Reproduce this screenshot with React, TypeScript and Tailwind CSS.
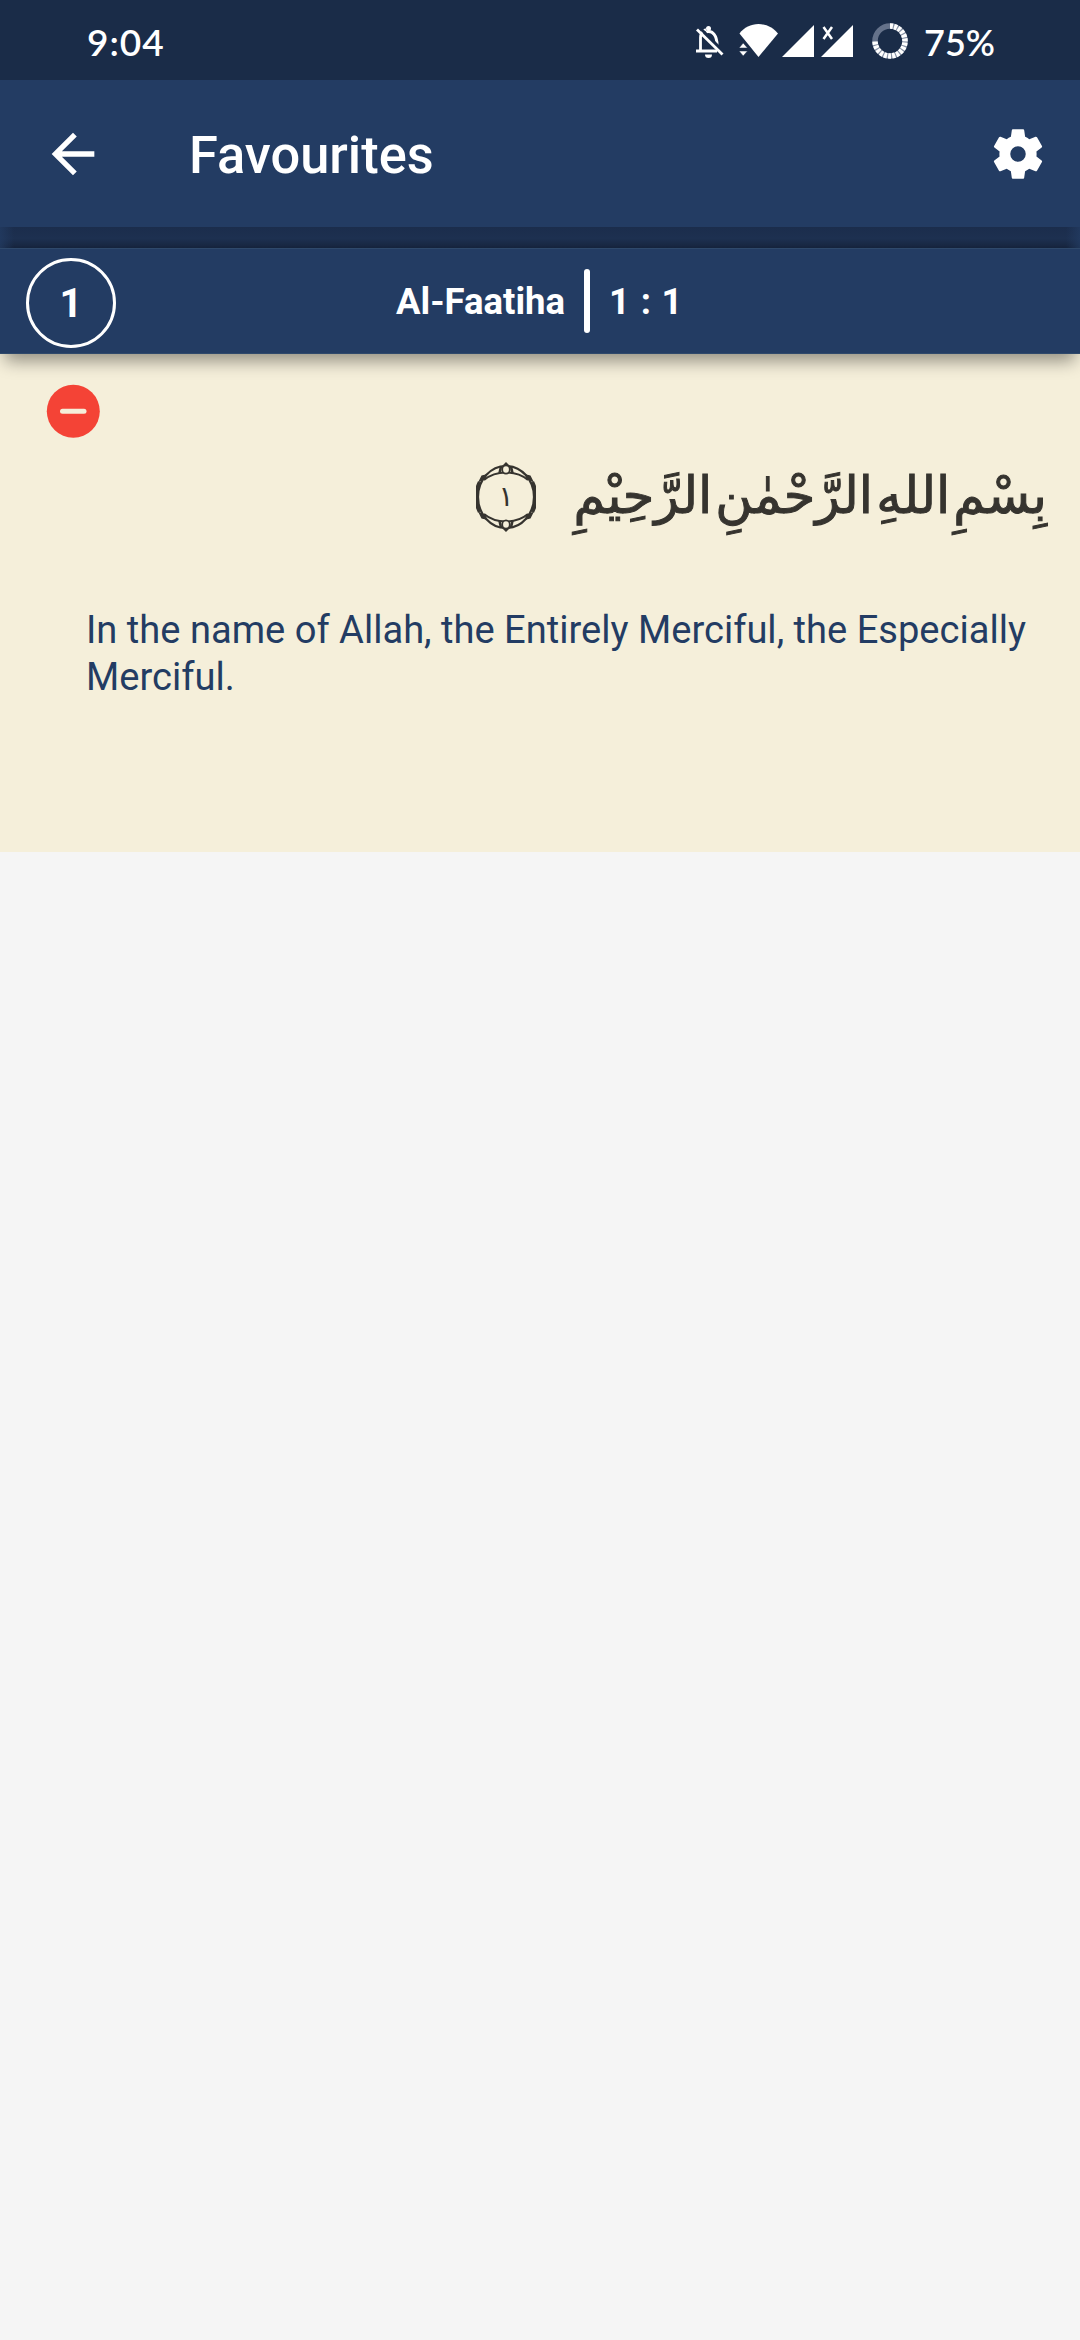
import React from "react";

function BellOff() {
  return (
    <svg className="block w-[30px] h-[34px]" viewBox="0 0 30 34" fill="none" stroke="#fff">
      <path d="M5.500 27V13.500C5.500 10 8 6.500 11 5.500" strokeWidth="2.800" />
      <path d="M1 27h21" strokeWidth="3" />
      <path d="M11 8c7-2 11 4 11 13" strokeWidth="3" />
      <circle cx="13.500" cy="4.500" r="2.500" fill="#fff" stroke="none" />
      <path d="M10 30.500h7a3.500 3.500 0 0 1-7 0z" fill="#fff" stroke="none" />
      <path d="M4.500 3.500L30 29" stroke="#1a2c48" strokeWidth="3" />
      <path d="M2 5.500L27.500 30.500" strokeWidth="2.800" />
    </svg>
  );
}

function Signals() {
  return (
    <svg className="block w-[115px] h-[34px]" viewBox="0 0 115 34" fill="#fff">
      <path d="M0.500 9.500C5 3.500 12 0 19.500 0S34 3.500 39 9.500L19.500 33z" />
      <path d="M0 24l4.200-5 4.300 5zM0 27h8.500l-4.300 5z" stroke="#1a2c48" strokeWidth="0.500" />
      <path d="M43 33L75 1v32z" />
      <path d="M82 33L114 1v32z" />
      <path d="M84.500 3l8.500 12M93 3l-8.500 12" stroke="#fff" strokeWidth="2.500" fill="none" />
    </svg>
  );
}

function BatteryRing() {
  return (
    <svg className="block w-9 h-9" viewBox="0 0 36 36" fill="none">
      <path d="M3 18A15 15 0 0 1 18 3" stroke="#65728a" strokeWidth="5.500" />
      <path d="M18 3A15 15 0 1 1 3 18" stroke="#8792a5" strokeWidth="5.500" />
      <path d="M18 3A15 15 0 1 1 3 18" stroke="#fff" strokeWidth="5.500" strokeDasharray="3 1.160" />
    </svg>
  );
}

function AyahMark() {
  return (
    <svg className="block w-[60px] h-[70px]" viewBox="0 0 60 70" fill="none" stroke="#36342f">
      <ellipse cx="30" cy="35" rx="28" ry="31" strokeWidth="2.200" />
      <path d="M3.500 20A31 33 0 0 0 3.500 50M56.500 20A31 33 0 0 1 56.500 50" strokeWidth="3.400" />
      <path d="M2 20.500L5.500 13.500L11.500 12L9 17.500zM58 20.500L54.500 13.500L48.500 12L51 17.500zM2 49.500L5.500 56.500L11.500 58L9 52.500zM58 49.500L54.500 56.500L48.500 58L51 52.500z" fill="#36342f" stroke="none" />
      <path d="M8 18Q17 10.500 30 10.500Q43 10.500 52 18M8 52Q17 59.500 30 59.500Q43 59.500 52 52" strokeWidth="2" />
      <path d="M25 4.500L23.500 11M35 4.500L36.500 11M25 65.500L23.500 59M35 65.500L36.500 59" strokeWidth="2.500" />
      <path d="M30 0l4.500 4.500h-9zM30 70l4.500-4.500h-9z" fill="#36342f" stroke="none" />
      <ellipse cx="30" cy="7.500" rx="3.800" ry="4.200" fill="#f5efda" strokeWidth="1.800" />
      <ellipse cx="30" cy="62.500" rx="3.800" ry="4.200" fill="#f5efda" strokeWidth="1.800" />
    </svg>
  );
}

export default function App() {
  return (
    <div className="flex h-[2340px] w-[1080px] flex-col overflow-hidden bg-[#f5f5f5] font-[Roboto,sans-serif] text-white">
      <div className="flex h-20 shrink-0 items-center bg-[#1a2c48] pl-[87px] pr-[85px] font-[Lato,sans-serif] text-[36px] font-semibold">
        <span className="mt-1 text-[37px] tracking-[1px]">9:04</span>
        <div className="ml-auto flex items-center">
          <div className="mt-0.5"><BellOff /></div>
          <div className="ml-[14px] mt-0.5"><Signals /></div>
          <div className="ml-[18px] mt-0.5"><BatteryRing /></div>
          <span className="ml-4 mt-1">75%</span>
        </div>
      </div>

      <header className="flex h-[147px] shrink-0 items-center bg-[#233c63] pr-[31px] pl-[41px]">
        <svg className="block h-16 w-16" viewBox="0 0 24 24" fill="#fff">
          <path d="M20 11H7.830l5.590-5.590L12 4l-8 8 8 8 1.410-1.410L7.830 13H20v-2z" />
        </svg>
        <h1 className="ml-[84px] mt-1 text-[52.400px] font-medium leading-none">Favourites</h1>
        <svg className="ml-auto block h-[62px] w-[62px]" viewBox="0 0 24 24" fill="#fff">
          <path d="M19.140 12.940c.04-.3.060-.61.060-.94 0-.32-.02-.64-.07-.94l2.030-1.580c.18-.14.230-.41.120-.61l-1.920-3.320c-.12-.22-.37-.29-.59-.22l-2.390.96c-.5-.38-1.030-.7-1.620-.94l-.36-2.540c-.04-.24-.24-.41-.48-.41h-3.840c-.24 0-.43.170-.47.410l-.36 2.540c-.59.240-1.130.57-1.620.94l-2.390-.96c-.22-.08-.47 0-.59.220L2.740 8.870c-.12.210-.08.470.120.610l2.030 1.580c-.05.300-.09.630-.09.940s.02.640.070.940l-2.030 1.580c-.18.140-.23.410-.12.610l1.920 3.320c.12.220.37.290.59.220l2.390-.96c.5.380 1.030.7 1.620.94l.36 2.540c.05.240.24.410.48.410h3.840c.24 0 .44-.17.470-.41l.36-2.540c.59-.24 1.130-.56 1.620-.94l2.390.96c.22.080.47 0 .59-.22l1.920-3.320c.12-.22.070-.47-.12-.61l-2.010-1.580zM12 15a3 3 0 1 1 0-6 3 3 0 0 1 0 6z" />
        </svg>
      </header>

      <div className="h-[21px] shrink-0 bg-[linear-gradient(to_right,#233c63bb,transparent_14px,transparent_1066px,#233c63bb),linear-gradient(to_bottom,#1b2d4c,#1d3050_55%,#16243d)]" />

      <section className="relative grid h-[106px] shrink-0 grid-cols-[396px_1fr] items-center border-y border-[#2f496b] bg-[#233c63] shadow-[0_12px_16px_-5px_rgba(0,0,0,0.4)]">
        <div className="ml-[26px] mt-1 flex h-[90px] w-[90px] items-center justify-center rounded-full border-[3px] border-white text-[40px] font-bold leading-none">
          <span className="mt-0.5">1</span>
        </div>
        <div className="flex items-center text-[36.500px] font-bold leading-none">
          <span className="mt-0.5">Al-Faatiha</span>
          <span className="ml-[19px] h-16 w-1.5 rounded-sm bg-white" />
          <span className="ml-[19px] mt-0.5 tracking-[0.8px]">1 : 1</span>
        </div>
      </section>

      <main className="flex h-[498px] shrink-0 flex-col bg-[#f5efda]">
        <svg className="ml-[41px] mt-[25px] block h-16 w-16" viewBox="0 0 64 64">
          <circle cx="32.300" cy="32.300" r="26.500" fill="#f44336" />
          <rect x="19" y="29.800" width="26.500" height="5" rx="2.500" fill="#f5efda" />
        </svg>
        <div className="flex h-[120px] items-start justify-between pl-[476px] pr-[33px]">
          <div className="relative mt-[19px] flex h-[70px] w-[60px] items-center justify-center">
            <AyahMark />
            <span className="absolute font-['DejaVu_Sans',sans-serif] text-[28px] leading-none text-[#36342f]">١</span>
          </div>
          <p dir="rtl" className="whitespace-nowrap font-['DejaVu_Sans',sans-serif] text-[51px] leading-[106px] text-[#36342f] [-webkit-text-stroke:1px_#36342f] [word-spacing:-13px]">
            بِسْمِ اللهِ الرَّحْمٰنِ الرَّحِيْمِ
          </p>
        </div>
        <p className="ml-[86px] mt-[44px] w-[960px] text-[38.100px] leading-[47px] text-[#233c63]">
          In the name of Allah, the Entirely Merciful, the Especially Merciful.
        </p>
      </main>
    </div>
  );
}
